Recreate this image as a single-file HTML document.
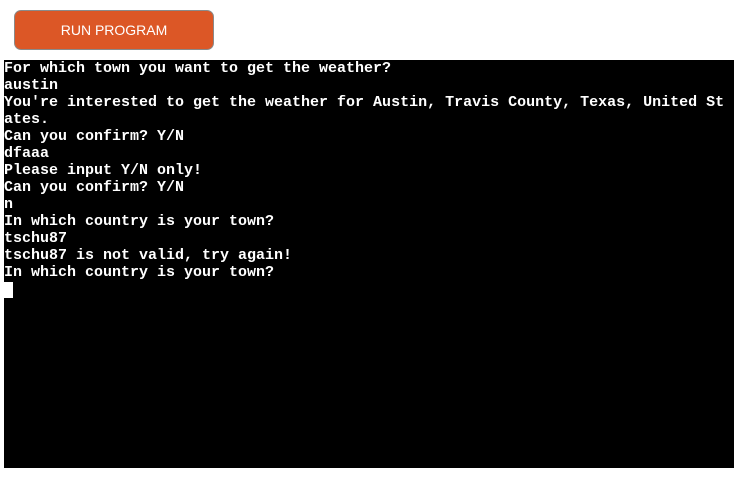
<!DOCTYPE html>
<html><head><style>
html,body{margin:0;padding:0;background:#fff;width:753px;height:479px;overflow:hidden}
.btn{position:absolute;left:14px;top:10px;width:198px;height:38px;background:#dc5726;border:1px solid #8a8a8a;border-radius:7px;color:#fff;font-family:"Liberation Sans",sans-serif;font-size:14px;text-align:center;line-height:38px}
.term{position:absolute;left:4px;top:60px;width:730px;height:408px;background:#000;color:#fff;font-family:"Liberation Mono","Courier New","DejaVu Sans Mono",monospace;font-weight:bold;font-size:15px;line-height:17px;white-space:pre}
.cur{display:inline-block;width:9px;height:16px;background:#fff;vertical-align:top;margin-top:1px}
</style></head><body>
<div class="btn">RUN PROGRAM</div>
<div class="term">For which town you want to get the weather?
austin
You're interested to get the weather for Austin, Travis County, Texas, United St
ates.
Can you confirm? Y/N
dfaaa
Please input Y/N only!
Can you confirm? Y/N
n
In which country is your town?
tschu87
tschu87 is not valid, try again!
In which country is your town?
<span class="cur"></span></div>
</body></html>
